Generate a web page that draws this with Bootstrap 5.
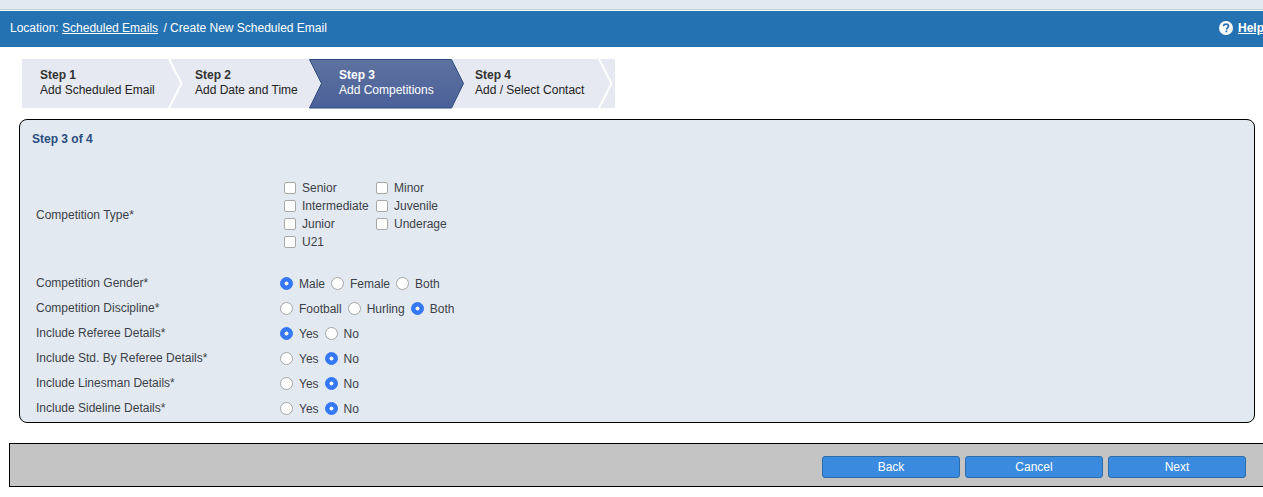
<!DOCTYPE html>
<html lang="en">
<head>
<meta charset="utf-8">
<title>Create New Scheduled Email</title>
<link href="https://cdn.jsdelivr.net/npm/bootstrap@5.3.0/dist/css/bootstrap.min.css" rel="stylesheet">
<style>
html, body { overflow: hidden; height: 497px; }
body { font-family: "Liberation Sans", Arial, sans-serif; font-size: 12px; color: #333; background: #fff; line-height: 18px; }
.topstrip { height: 11px; background: #e2e9f0; border-bottom: 1px solid #fff; box-shadow: inset 0 -1px 0 #c9ced3; }
.locbar { height: 36px; background: #2572b2; color: #fff; padding: 0 0 3px 10px; overflow: hidden; }
.locbar a { color: #fff; }
.crumbrest { margin-left: 2px; }
.helplink { margin-right: -1px; font-weight: 700; gap: 5px; }
.stepper { position: relative; width: 593px; height: 49px; margin: 12px 0 0 22px; background: #e6e9f1; }
.stepart { position: absolute; left: 0; top: 0; width: 593px; height: 50px; }
.stepitem { position: relative; padding-top: 9px; line-height: 15px; color: #222; }
.stepitem b { color: #333; display: block; }
.s1 { width: 173px; padding-left: 18px; }
.s2 { width: 144px; }
.s3 { width: 136px; color: #fff; }
.s3 b { color: #fff; }
.panelbox { margin: 11px 8px 0 19px; height: 304px; background: #e2e9f1; border: 1px solid #000; border-radius: 8px; padding: 10px 12px 0 16px; color: #3c4148; }
.paneltitle { color: #2a4d7f; font-weight: 700; margin-left: -4px; height: 17px; }
.typerow { margin-top: 32px; height: 72px; margin-bottom: 20px; }
.fieldlabel { width: 244px; flex: none; }
.checkgrid { display: grid; grid-template-columns: 92px 92px; grid-auto-rows: 18px; margin-left: 4px; }
.checkgrid label, .radioset label { display: inline-flex; align-items: center; color: #3c4148; }
.form-check-input.cbx { width: 12px; height: 12px; margin: 0 6px 0 0; border: 1px solid #a8a8a8; border-radius: 2px; background-color: #fff; flex: none; }
.radiorow { height: 25px; }
.radiorow .fieldlabel { margin-top: -2px; }
.radioset { gap: 6px; }
.form-check-input.rdo { width: 13px; height: 13px; margin: 0 6px 0 0; border: 1px solid #a5a5a5; background-color: #fff; flex: none; background-image: none; }
.form-check-input.rdo:checked { border-color: #3478f6; background-color: #3478f6; background-image: radial-gradient(circle, #fff 0, #fff 1.7px, transparent 2.3px); }
.actionbar { height: 44px; margin: 20px 0 0 9px; background: #c4c4c4; border: 1px solid #000; border-right: 0; padding: 4px 17px 0 0; gap: 5px; }
.btn.actionbtn { width: 138px; height: 22px; padding: 0; font-size: 12px; line-height: 20px; color: #fff; background: #3a8bdf; border: 1px solid #2d6cab; border-radius: 3px; }
</style>
</head>
<body>
<div class="topstrip"></div>
<header class="locbar d-flex align-items-center justify-content-between">
  <div>Location: <a href="#">Scheduled Emails</a> <span class="crumbrest">/ Create New Scheduled Email</span></div>
  <a href="#" class="helplink d-flex align-items-center">
    <svg width="14" height="14" viewBox="0 0 14 14" aria-hidden="true"><circle cx="7" cy="7" r="7" fill="#fff"/><path d="M4.600 5.300C4.700 3.900 5.700 3.100 7.100 3.100c1.400 0 2.400.8 2.400 2 0 1-.6 1.500-1.200 1.900-.6.4-.8.7-.8 1.300v.2" fill="none" stroke="#2572b2" stroke-width="1.700"/><rect x="6.500" y="9.500" width="1.800" height="1.800" fill="#2572b2"/></svg>
    <span class="text-decoration-underline">Help</span>
  </a>
</header>
<nav class="stepper d-flex">
  <svg class="stepart" viewBox="0 0 593 50" aria-hidden="true">
    <defs><linearGradient id="activeFill" x1="0" y1="0" x2="0" y2="1"><stop offset="0" stop-color="#5f739f"/><stop offset="1" stop-color="#4a6099"/></linearGradient></defs>
    <path d="M147 0L159.500 24.500L147 49" fill="none" stroke="#fff" stroke-width="2"/>
    <path d="M287.500 .5H429.500L441.500 24.500L429.500 49H287.500L299.500 24.500Z" fill="url(#activeFill)" stroke="#2b4a80"/>
    <path d="M577 0L589.500 24.500L577 49" fill="none" stroke="#fff" stroke-width="2"/>
  </svg>
  <div class="stepitem s1"><b>Step 1</b>Add Scheduled Email</div>
  <div class="stepitem s2"><b>Step 2</b>Add Date and Time</div>
  <div class="stepitem s3"><b>Step 3</b>Add Competitions</div>
  <div class="stepitem"><b>Step 4</b>Add / Select Contact</div>
</nav>
<main class="panelbox">
  <div class="paneltitle">Step 3 of 4</div>
  <div class="typerow d-flex align-items-center">
    <div class="fieldlabel">Competition Type*</div>
    <div class="checkgrid">
      <label><input class="form-check-input cbx" type="checkbox">Senior</label>
      <label><input class="form-check-input cbx" type="checkbox">Minor</label>
      <label><input class="form-check-input cbx" type="checkbox">Intermediate</label>
      <label><input class="form-check-input cbx" type="checkbox">Juvenile</label>
      <label><input class="form-check-input cbx" type="checkbox">Junior</label>
      <label><input class="form-check-input cbx" type="checkbox">Underage</label>
      <label><input class="form-check-input cbx" type="checkbox">U21</label>
    </div>
  </div>
  <div class="radiorow d-flex align-items-center">
    <div class="fieldlabel">Competition Gender*</div>
    <div class="radioset d-flex">
      <label><input class="form-check-input rdo" type="radio" name="g" checked>Male</label>
      <label><input class="form-check-input rdo" type="radio" name="g">Female</label>
      <label><input class="form-check-input rdo" type="radio" name="g">Both</label>
    </div>
  </div>
  <div class="radiorow d-flex align-items-center">
    <div class="fieldlabel">Competition Discipline*</div>
    <div class="radioset d-flex">
      <label><input class="form-check-input rdo" type="radio" name="d">Football</label>
      <label><input class="form-check-input rdo" type="radio" name="d">Hurling</label>
      <label><input class="form-check-input rdo" type="radio" name="d" checked>Both</label>
    </div>
  </div>
  <div class="radiorow d-flex align-items-center">
    <div class="fieldlabel">Include Referee Details*</div>
    <div class="radioset d-flex">
      <label><input class="form-check-input rdo" type="radio" name="r" checked>Yes</label>
      <label><input class="form-check-input rdo" type="radio" name="r">No</label>
    </div>
  </div>
  <div class="radiorow d-flex align-items-center">
    <div class="fieldlabel">Include Std. By Referee Details*</div>
    <div class="radioset d-flex">
      <label><input class="form-check-input rdo" type="radio" name="s">Yes</label>
      <label><input class="form-check-input rdo" type="radio" name="s" checked>No</label>
    </div>
  </div>
  <div class="radiorow d-flex align-items-center">
    <div class="fieldlabel">Include Linesman Details*</div>
    <div class="radioset d-flex">
      <label><input class="form-check-input rdo" type="radio" name="l">Yes</label>
      <label><input class="form-check-input rdo" type="radio" name="l" checked>No</label>
    </div>
  </div>
  <div class="radiorow d-flex align-items-center">
    <div class="fieldlabel">Include Sideline Details*</div>
    <div class="radioset d-flex">
      <label><input class="form-check-input rdo" type="radio" name="e">Yes</label>
      <label><input class="form-check-input rdo" type="radio" name="e" checked>No</label>
    </div>
  </div>
</main>
<footer class="actionbar d-flex align-items-center justify-content-end">
  <button type="button" class="btn actionbtn">Back</button>
  <button type="button" class="btn actionbtn">Cancel</button>
  <button type="button" class="btn actionbtn">Next</button>
</footer>
<script src="https://cdn.jsdelivr.net/npm/bootstrap@5.3.0/dist/js/bootstrap.bundle.min.js"></script>
</body>
</html>
